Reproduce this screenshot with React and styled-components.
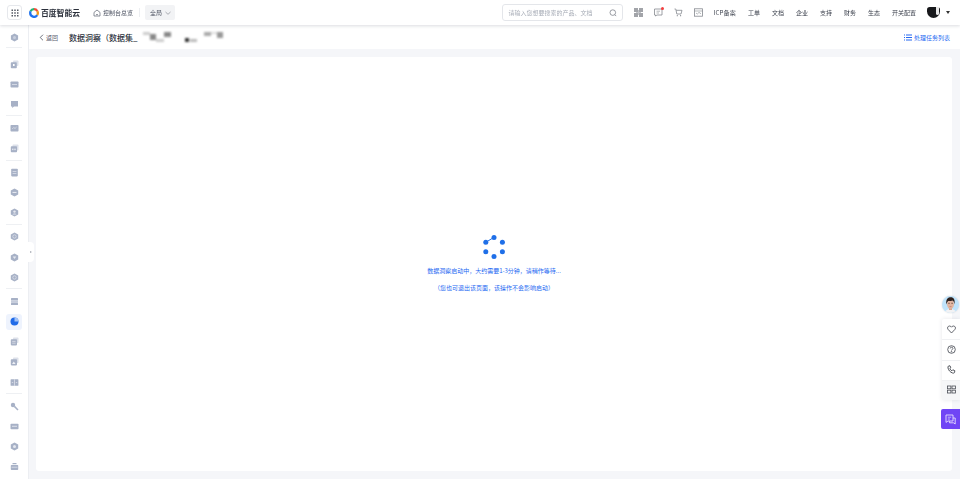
import React from "react";
import styled, { createGlobalStyle } from "styled-components";

const Global = createGlobalStyle`
  html, body { margin: 0; padding: 0; height: 100%; background: #fff; overflow: hidden; }
  #root { height: 100%; }
  * { box-sizing: border-box; }
`;

const Page = styled.div`
  position: relative;
  width: 960px;
  height: 479px;
  display: flex;
  flex-direction: column;
  font-family: "Noto Sans CJK SC", "Liberation Sans", sans-serif;
  font-size: 6px;
  color: #303540;
  overflow: hidden;
  filter: blur(0.3px);
`;

/* top bar */
const TopBar = styled.header`
  position: relative;
  z-index: 3;
  height: 25px;
  flex: none;
  display: flex;
  align-items: center;
  padding: 0 0 0 7px;
  background: #fff;
  box-shadow: 0 1px 3px rgba(30, 40, 60, 0.16);
`;
const GridButton = styled.div`
  width: 15px;
  height: 15px;
  border: 1px solid #e6e8ec;
  border-radius: 3px;
  display: flex;
  align-items: center;
  justify-content: center;
`;
const Logo = styled.div`
  display: flex;
  align-items: center;
  gap: 2px;
  margin-left: 7px;
  width: 59px;
  font-size: 7.8px;
  font-weight: 700;
  color: #2a2f3a;
  white-space: nowrap;
`;
const HomeLink = styled.div`
  display: flex;
  align-items: center;
  gap: 2px;
  color: #4b5160;
  white-space: nowrap;
`;
const HomeIcon = styled.svg`
  margin-left: 5px;
`;
const VDivider = styled.span`
  width: 1px;
  height: 9px;
  background: #eceef1;
  margin: 0 5px 0 6px;
`;
const Scope = styled.div`
  width: 30px;
  height: 15px;
  border-radius: 2px;
  background: #f2f3f5;
  display: flex;
  align-items: center;
  gap: 3px;
  padding-left: 5px;
  color: #4b5160;
`;
const Search = styled.div`
  width: 121px;
  height: 17px;
  margin-left: auto;
  border: 1px solid #e4e6ea;
  border-radius: 3px;
  display: flex;
  align-items: center;
  justify-content: space-between;
  padding: 0 5px 0 6px;
  color: #a9aeb8;
  white-space: nowrap;
`;
const IconRow = styled.div`
  display: flex;
  align-items: center;
  gap: 11px;
  margin-left: 11px;
`;
const NavIcon = styled.span`
  position: relative;
  width: 9px;
  height: 9px;
  display: flex;
`;
const RedDot = styled.i`
  position: absolute;
  top: -1px;
  right: -1px;
  width: 3px;
  height: 3px;
  border-radius: 50%;
  background: #f33e3e;
`;
const NavLinks = styled.nav`
  display: flex;
  align-items: center;
  gap: 12px;
  margin-left: 11px;
  color: #3c414d;
  white-space: nowrap;
`;
const Latin = styled.span`
  letter-spacing: 0.2px;
`;
const UserArea = styled.div`
  display: flex;
  align-items: center;
  gap: 6px;
  margin: 0 10px 0 11px;
`;
const UserBlob = styled.span`
  width: 13px;
  height: 11px;
  border-radius: 3px 3px 7px 7px;
  background: #17181b;
  display: flex;
  justify-content: flex-end;
`;
const UserSlit = styled.i`
  width: 3px;
  height: 8px;
  margin-right: 1px;
  background: #e8e8e8;
  border-radius: 0 0 3px 3px;
`;
const Caret = styled.i`
  width: 0;
  height: 0;
  border-left: 2px solid transparent;
  border-right: 2px solid transparent;
  border-top: 3px solid #333;
`;

/* body */
const Body = styled.div`
  flex: 1;
  min-height: 0;
  display: flex;
`;
const Sidebar = styled.aside`
  position: relative;
  width: 29px;
  flex: none;
  background: #fff;
  border-right: 1px solid #eceef2;
  padding-top: 4px;
  display: flex;
  flex-direction: column;
  align-items: center;
`;
const SideGroup = styled.div`
  width: 100%;
  display: flex;
  flex-direction: column;
  align-items: center;
  gap: 4.2px;
`;
const SideRule = styled.hr`
  width: 16px;
  height: 1px;
  border: 0;
  flex: none;
  margin: ${(p) => (p.$first ? "2px 0 8px" : "3px 0 4px")};
  background: #eef0f3;
`;
const SideItem = styled.div`
  width: 16px;
  height: 16px;
  flex: none;
  display: flex;
  align-items: center;
  justify-content: center;
  border-radius: 3px;
  background: ${(p) => (p.$active ? "#eef3fd" : "transparent")};
`;
const Handle = styled.div`
  position: absolute;
  left: 28px;
  top: 217px;
  width: 6px;
  height: 20px;
  background: #fff;
  border-radius: 0 4px 4px 0;
  display: flex;
  align-items: center;
  justify-content: center;
`;
const HandleArrow = styled.i`
  width: 0;
  height: 0;
  border-top: 1.5px solid transparent;
  border-bottom: 1.5px solid transparent;
  border-left: 2px solid #a5a9b2;
`;

const Main = styled.main`
  flex: 1;
  min-width: 0;
  display: flex;
  flex-direction: column;
  background: #f5f6f9;
`;
const PageHeader = styled.div`
  height: 24px;
  flex: none;
  background: #fff;
  display: flex;
  align-items: center;
  padding: 0 10px 0 10px;
`;
const Back = styled.div`
  display: flex;
  align-items: center;
  gap: 2px;
  color: #5c6270;
  margin-right: 11px;
`;
const Title = styled.h1`
  margin: 0;
  font-size: 8px;
  font-weight: 500;
  color: #2c313c;
  white-space: nowrap;
`;
const Redacted = styled.div`
  display: flex;
  align-items: center;
  height: 10px;
  margin-left: 5px;
  filter: blur(0.8px);
`;
const Smudge = styled.span`
  width: ${(p) => p.$w}px;
  height: ${(p) => p.$h}px;
  margin-right: ${(p) => p.$gap || 0}px;
  background: ${(p) => p.$c};
  align-self: ${(p) => p.$align || "center"};
`;
const TaskLink = styled.div`
  margin-left: auto;
  display: flex;
  align-items: center;
  gap: 2px;
  color: #2468f2;
  white-space: nowrap;
`;
const Card = styled.section`
  flex: 1;
  min-height: 0;
  margin: 8px 8px 8px 7px;
  background: #fff;
  border-radius: 3px;
  display: flex;
  flex-direction: column;
  align-items: center;
  padding-top: 178px;
`;
const Status = styled.p`
  margin: 0;
  color: #2468f2;
  line-height: 9px;
  white-space: nowrap;
`;
const StatusFirst = styled(Status)`
  margin-top: 7px;
`;
const StatusSecond = styled(Status)`
  margin-top: 8px;
`;

/* floating */
const Face = styled.div`
  position: absolute;
  left: 942px;
  top: 296px;
  width: 17px;
  height: 17px;
  border-radius: 50%;
  overflow: hidden;
  background: #bfe3fb;
  box-shadow: 0 0 2px rgba(0, 0, 0, 0.15);
`;
const Float = styled.div`
  position: absolute;
  left: 942px;
  top: 319px;
  width: 18px;
  height: 81px;
  background: #fff;
  border-radius: 2px 0 0 2px;
  box-shadow: 0 0 4px rgba(40, 50, 70, 0.12);
  display: flex;
  flex-direction: column;
`;
const FloatItem = styled.div`
  flex: 1;
  display: flex;
  align-items: center;
  justify-content: center;
  background: ${(p) => (p.$shaded ? "#f5f6f8" : "transparent")};
  & + & { box-shadow: inset 0 1px 0 #f0f1f3; }
`;
const Chat = styled.div`
  position: absolute;
  left: 941px;
  top: 409px;
  width: 19px;
  height: 20px;
  border-radius: 2px 0 0 2px;
  background: #7045f5;
  display: flex;
  align-items: center;
  justify-content: center;
`;

const S = "#a7b1c6";
const SL = "#dde1ea";
const sideIcons = {
  hex: <><path d="M4.5.5l3.6 2v4l-3.6 2-3.6-2v-4z" fill={S}/><circle cx="4.5" cy="4.5" r="1.5" fill="#c8cfde"/></>,
  cube: <><rect x="3" y=".5" width="5.5" height="5.5" rx="1" fill={SL}/><rect x=".8" y="2.2" width="6" height="6" rx=".8" fill={S}/><rect x="3" y="4" width="1.6" height="2" fill="#fff"/></>,
  panel: <><rect x=".5" y="1.5" width="8" height="6" rx=".8" fill={S}/><rect x="2" y="4" width="5" height=".8" fill="#dfe3ec"/></>,
  bubble: <><path d="M1 1h7v5.5H4L2.2 8V6.5H1z" fill={S}/></>,
  screen: <><rect x=".5" y="1" width="8" height="6.5" rx=".8" fill={S}/><path d="M2.2 5l1.5-1.5L5 4.5l1.6-1.5" stroke="#eef0f5" strokeWidth=".6" fill="none"/></>,
  stack: <><rect x="2.5" y=".6" width="6" height="6" rx=".8" fill={SL}/><rect x=".8" y="2.3" width="6.2" height="6" rx=".8" fill={S}/><rect x="2.2" y="4.6" width="1.2" height="1.5" fill="#eef0f5"/><rect x="4.4" y="4.6" width="1.2" height="1.5" fill="#eef0f5"/></>,
  doc: <><rect x="1.2" y=".8" width="6.6" height="7.6" rx=".8" fill={S}/><rect x="2.6" y="3" width="3.8" height=".7" fill="#e4e7ef"/><rect x="2.6" y="5" width="3.8" height=".7" fill="#e4e7ef"/></>,
  hexLine: <><path d="M4.5.4l3.7 2.1v4L4.5 8.6.8 6.5v-4z" fill={S}/><rect x="2.5" y="3.9" width="4" height="1.1" fill="#e4e7ef"/></>,
  hexUser: <><path d="M4.5.4l3.7 2.1v4L4.5 8.6.8 6.5v-4z" fill={S}/><circle cx="4.5" cy="3.6" r="1.2" fill="#e4e7ef"/><path d="M2.6 6.5c.4-1.3 3.4-1.3 3.8 0z" fill="#e4e7ef"/></>,
  hexDown: <><path d="M4.5.4l3.7 2.1v4L4.5 8.6.8 6.5v-4z" fill={S}/><path d="M2.700 3.600h3.600L4.500 6z" fill="#e4e7ef"/></>,
  hexRing: <><path d="M4.5.4l3.7 2.1v4L4.5 8.6.8 6.5v-4z" fill={S}/><circle cx="4.5" cy="4.5" r="1.700" fill="none" stroke="#e4e7ef" strokeWidth=".7"/></>,
  layers: <><rect x="1" y="1" width="7" height="2.4" rx=".5" fill={S}/><rect x="1" y="3.4" width="7" height="2.3" rx=".5" fill="#c5ccdb"/><rect x="1" y="5.7" width="7" height="2.4" rx=".5" fill={S}/></>,
  active: <><circle cx="4.5" cy="4.5" r="4" fill="#1f6ae8"/><path d="M4.5 4.5V.5a4 4 0 0 1 4 4z" fill="#9fc1f7"/></>,
  swap: <><rect x="3" y=".6" width="5.5" height="5.5" rx=".8" fill={SL}/><rect x=".8" y="2.2" width="6.2" height="6.2" rx=".8" fill={S}/><path d="M2.2 4.4h3.4M2.2 6.2h3.4" stroke="#eef0f5" strokeWidth=".6"/></>,
  pic: <><rect x="3" y=".6" width="5.5" height="5.5" rx=".8" fill={SL}/><rect x=".8" y="2.2" width="6.2" height="6.2" rx=".8" fill={S}/><path d="M2 7l1.8-2.6L5.6 7z" fill="#eef0f5"/></>,
  table: <><rect x=".6" y="1.2" width="7.8" height="6.6" rx=".5" fill={S}/><rect x="4.2" y="1.2" width=".7" height="6.6" fill="#e4e7ef"/><rect x="1.8" y="4.2" width="1.4" height=".7" fill="#e4e7ef"/><rect x="5.8" y="4.2" width="1.4" height=".7" fill="#e4e7ef"/></>,
  key: <><circle cx="3" cy="3" r="2.2" fill={S}/><path d="M4.4 4.4L8 8" stroke={S} strokeWidth="1.5"/></>,
  card: <><rect x=".5" y="1.8" width="8" height="5.4" rx=".8" fill={S}/><rect x="2" y="3.8" width="5" height=".9" fill="#e4e7ef"/></>,
  disc: <><path d="M4.5.4l3.7 2.1v4L4.5 8.6.8 6.5v-4z" fill={S}/><circle cx="4.5" cy="4.5" r="1.5" fill="#e4e7ef"/></>,
  tray: <><rect x=".8" y="3" width="7.4" height="5" rx=".7" fill={S}/><rect x="2.5" y="1" width="4" height="1.2" fill={S}/><rect x="1.5" y="4.8" width="6" height=".7" fill="#e4e7ef"/></>,
};
const groups = [
  ["hex"],
  ["cube", "panel", "bubble"],
  ["screen", "stack"],
  ["doc", "hexLine", "hexUser"],
  ["hexRing", "hexDown", "hexRing"],
  ["layers", "active", "swap", "pic", "table"],
  ["key", "card", "disc", "tray"],
];

const SideIcon = ({ name }) => (
  <svg width="9" height="9" viewBox="0 0 9 9">{sideIcons[name]}</svg>
);

const line = { fill: "none", stroke: "#85898f", strokeWidth: 0.8 };

export default function App() {
  return (
    <Page>
      <Global />
      <TopBar>
        <GridButton>
          <svg width="8" height="8" viewBox="0 0 8 8" fill="#555a64">
            {[0.5, 3.25, 6].map((y) =>
              [0.5, 3.25, 6].map((x) => <rect key={`${x}${y}`} x={x} y={y} width="1.5" height="1.5" />)
            )}
          </svg>
        </GridButton>
        <Logo>
          <svg width="10" height="10" viewBox="0 0 10 10" fill="none" strokeWidth="2.3">
            <path d="M1.6 3.200A3.800 3.800 0 0 1 5 1.200" stroke="#22b573" />
            <path d="M5 1.200a3.800 3.800 0 0 1 3.300 1.900" stroke="#ee4d3a" />
            <path d="M8.300 3.100a3.800 3.800 0 0 1-.1 4" stroke="#f29b1d" />
            <path d="M8.200 7.100A3.800 3.800 0 0 1 1.200 5 3.800 3.800 0 0 1 1.600 3.200" stroke="#1f72ee" />
          </svg>
          百度智能云
        </Logo>
        <HomeLink>
          <HomeIcon width="8" height="8" viewBox="0 0 8 8" fill="none" stroke="#5c6270" strokeWidth=".7">
            <path d="M1 3.400L4 1l3 2.400V7H1z" />
            <path d="M3 5.600h2" />
          </HomeIcon>
          控制台总览
        </HomeLink>
        <VDivider />
        <Scope>
          全局
          <svg width="6" height="4" viewBox="0 0 6 4" fill="none" stroke="#777b84" strokeWidth=".6">
            <path d="M.5 1L3 3.300 5.500 1" />
          </svg>
        </Scope>
        <Search>
          请输入您想要搜索的产品、文档
          <svg width="8" height="8" viewBox="0 0 8 8" fill="none" stroke="#6e737d" strokeWidth=".7">
            <circle cx="3.800" cy="3.600" r="2.800" />
            <path d="M5.800 5.700l1.400 1.400" />
          </svg>
        </Search>
        <IconRow>
          <NavIcon>
            <svg width="9" height="9" viewBox="0 0 9 9" fill="#a2a4a9">
              <rect width="4" height="4" />
              <rect x="5" width="4" height="4" />
              <rect y="5" width="4" height="4" />
              <rect x="5" y="5" width="4" height="4" />
              <rect x="4" y="2" width="1" height="5" fill="#c2c4c8" />
              <rect x="2" y="4" width="5" height="1" fill="#c2c4c8" />
            </svg>
          </NavIcon>
          <NavIcon>
            <svg width="9" height="9" viewBox="0 0 9 9">
              <path d="M.5 1h7.500v6H3L1.500 8V7h-1z" {...line} />
              <path d="M2.500 3.200h3.500M2.500 5h2.500" {...line} strokeWidth=".6" />
            </svg>
            <RedDot />
          </NavIcon>
          <NavIcon>
            <svg width="9" height="9" viewBox="0 0 9 9">
              <path d="M.5 1h1.300l1 5H7l1-3.700H2.200" {...line} />
              <circle cx="3.300" cy="7.700" r=".6" fill="#85898f" />
              <circle cx="6.600" cy="7.700" r=".6" fill="#85898f" />
            </svg>
          </NavIcon>
          <NavIcon>
            <svg width="9" height="9" viewBox="0 0 9 9">
              <rect x=".5" y=".8" width="8" height="7.400" {...line} />
              <path d="M.5 3h8M2 5l1.300 1L5 4.400l2 1.400" {...line} strokeWidth=".6" />
            </svg>
          </NavIcon>
        </IconRow>
        <NavLinks>
          <Latin>ICP备案</Latin>
          <span>工单</span>
          <span>文档</span>
          <span>企业</span>
          <span>支持</span>
          <span>财务</span>
          <span>生态</span>
          <span>开关配置</span>
        </NavLinks>
        <UserArea>
          <UserBlob><UserSlit /></UserBlob>
          <Caret />
        </UserArea>
      </TopBar>

      <Body>
        <Sidebar>
          {groups.map((g, i) => (
            <React.Fragment key={i}>
              {i > 0 && <SideRule $first={i === 1} />}
              <SideGroup>
                {g.map((n, j) => (
                  <SideItem key={j} $active={n === "active"}>
                    <SideIcon name={n} />
                  </SideItem>
                ))}
              </SideGroup>
            </React.Fragment>
          ))}
          <Handle><HandleArrow /></Handle>
        </Sidebar>
        <Main>
          <PageHeader>
            <Back>
              <svg width="5" height="7" viewBox="0 0 5 7" fill="none" stroke="#4b5160" strokeWidth=".8">
                <path d="M4 .7L1.200 3.500 4 6.300" />
              </svg>
              返回
            </Back>
            <Title>数据洞察（数据集_</Title>
            <Redacted>
              <Smudge $w={7} $h={3} $c="#ccc" $align="flex-start" />
              <Smudge $w={6} $h={6} $c="#888" />
              <Smudge $w={8} $h={3} $c="#ccc" $align="flex-end" />
              <Smudge $w={7} $h={5} $gap={14} $c="#888" $align="flex-start" />
              <Smudge $w={4} $h={4} $gap={1} $c="#333" $align="flex-end" />
              <Smudge $w={7} $h={3} $gap={7} $c="#bbb" $align="flex-end" />
              <Smudge $w={7} $h={4} $c="#aaa" $align="flex-start" />
              <Smudge $w={6} $h={2} $c="#ddd" $align="flex-start" />
              <Smudge $w={6} $h={6} $c="#999" $align="flex-start" />
            </Redacted>
            <TaskLink>
              <svg width="8" height="7" viewBox="0 0 8 7" fill="#2468f2">
                <rect y=".5" width="1" height="1" />
                <rect x="2" y=".5" width="6" height="1" />
                <rect y="3" width="1" height="1" />
                <rect x="2" y="3" width="6" height="1" />
                <rect y="5.500" width="1" height="1" />
                <rect x="2" y="5.500" width="6" height="1" />
              </svg>
              处理任务列表
            </TaskLink>
          </PageHeader>
          <Card>
            <svg width="24" height="24" viewBox="0 0 24 24" fill="#1f6fe8">
              <path d="M3.800 7.300L12 2.300" stroke="#1f6fe8" strokeWidth="1" />
              <circle cx="12" cy="2.500" r="2.500" />
              <circle cx="20.400" cy="7.300" r="2.500" />
              <circle cx="20.400" cy="16.700" r="2.500" />
              <circle cx="12" cy="21.500" r="2.500" />
              <circle cx="3.800" cy="16.700" r="2.500" />
              <circle cx="3.800" cy="7.300" r="2.500" />
            </svg>
            <StatusFirst>数据洞察启动中，大约需要1-3分钟，请稍作等待...</StatusFirst>
            <StatusSecond>（您也可退出该页面，该操作不会影响启动）</StatusSecond>
          </Card>
        </Main>
      </Body>

      <Face>
        <svg width="17" height="17" viewBox="0 0 17 17">
          <path d="M3 17c0-3 3-4 5.500-4s5.500 1 5.500 4z" fill="#f2f2f4" />
          <rect x="7" y="10" width="3" height="4" fill="#d9a892" />
          <ellipse cx="8.500" cy="8" rx="3.500" ry="5" fill="#e2b5a0" />
          <path d="M4.400 8.500C3.400 3 6.300 1.200 8.800 1.200c3 0 4.300 2.200 3.800 7.300-.4-2.300-1-3.700-2.200-4-1.500.6-3.300.6-4.300.4-.8.8-1.400 2-1.700 3.600z" fill="#2e211d" />
          <path d="M6.300 7.300h1.400M9.400 7.300h1.400" stroke="#3a2a25" strokeWidth=".7" />
          <path d="M7.500 10.600h2" stroke="#b56a5e" strokeWidth=".6" />
        </svg>
      </Face>
      <Float>
        <FloatItem>
          <svg width="9" height="9" viewBox="0 0 9 9" fill="none" stroke="#3f434b" strokeWidth=".8">
            <path d="M4.500 8L1 4.300C-.2 2.800 1 .9 2.600 1c.9 0 1.500.5 1.900 1.200C4.900 1.500 5.500 1 6.400 1 8 .9 9.200 2.800 8 4.300z" />
          </svg>
        </FloatItem>
        <FloatItem>
          <svg width="9" height="9" viewBox="0 0 9 9" fill="none" stroke="#3f434b" strokeWidth=".8">
            <circle cx="4.500" cy="4.500" r="3.800" />
            <path d="M3.200 3.500c0-1.700 2.700-1.700 2.700 0 0 1-1.400 1-1.400 2" />
            <circle cx="4.500" cy="6.700" r=".3" />
          </svg>
        </FloatItem>
        <FloatItem>
          <svg width="9" height="9" viewBox="0 0 9 9" fill="none" stroke="#3f434b" strokeWidth=".9">
            <path d="M1.500 1l1.500-.2.800 2-1 .8c.4 1 1.100 1.700 2.100 2.200l.9-1 2 .9-.2 1.600C7.500 8 6.600 8.300 5.600 8 3.200 7.200 1.500 5.300 1 3 .9 2.100 1 1.500 1.500 1z" />
          </svg>
        </FloatItem>
        <FloatItem $shaded>
          <svg width="9" height="9" viewBox="0 0 9 9" fill="none" stroke="#4a4e56" strokeWidth=".8">
            <rect x=".5" y="1" width="3.400" height="2.800" />
            <rect x="5" y="1" width="3.400" height="2.800" />
            <rect x=".5" y="5.200" width="3.400" height="2.800" />
            <rect x="5" y="5.200" width="3.400" height="2.800" />
          </svg>
        </FloatItem>
      </Float>
      <Chat>
        <svg width="11" height="11" viewBox="0 0 11 11" fill="none" stroke="#e7defe" strokeWidth=".9">
          <path d="M1 1h7v6H3L1 8.400z" />
          <path d="M8 4h2.200v6L8.500 8.800H4.500V7.200" />
          <path d="M2.800 3.200h3.400M2.800 5h2.200" strokeWidth=".7" />
        </svg>
      </Chat>
    </Page>
  );
}
